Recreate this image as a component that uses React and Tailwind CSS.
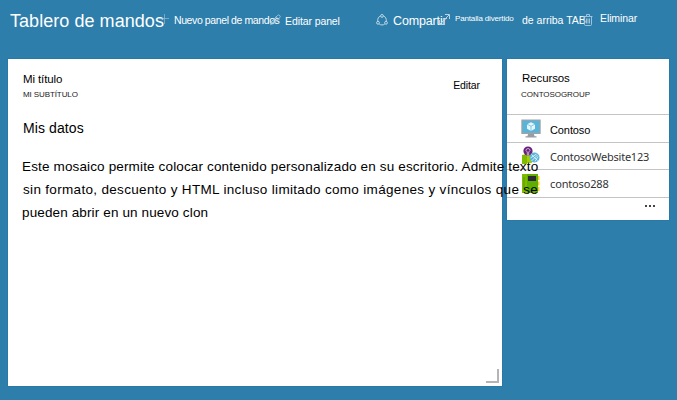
const Label = ({ className = "", children }) => (
  <span className={`block whitespace-nowrap shrink-0 ${className}`}>{children}</span>
);

const PlusIcon = () => (
  <svg viewBox="0 0 10 10" className="mt-[14px] h-[10px] w-[10px] shrink-0" stroke="#9cc4dc" strokeOpacity=".6" fill="none">
    <path d="M5.500 0v10M0 4.500h10" />
  </svg>
);

const PencilIcon = () => (
  <svg viewBox="0 0 11 11" className="mt-[14px] h-[11px] w-[11px] shrink-0" stroke="#a9cbe0" strokeWidth=".9" fill="none">
    <path d="M.6 10.400l1-3 5.900-5.900a1.500 1.500 0 0 1 2.200 2.200L3.700 9.500zM1.600 7.400l2.100 2.100M6.200 2.800l2.200 2.200" />
  </svg>
);

const ShareIcon = () => (
  <svg viewBox="0 0 12 12" className="mt-[14px] h-3 w-3 shrink-0" stroke="#c3dbe9" strokeWidth=".95" fill="none">
    <path d="M4.300 2.100C2.500 2.800 1.600 4.500 1.700 7M7.700 2.100c1.800.7 2.700 2.400 2.600 4.900M3.300 10.200c1.700 1 3.700 1 5.400 0" />
    <circle cx="6" cy="1.900" r="1.400" />
    <circle cx="2" cy="8.800" r="1.400" />
    <circle cx="10" cy="8.800" r="1.400" />
  </svg>
);

const ExpandIcon = () => (
  <svg viewBox="0 0 11 11" className="mt-[14px] h-[11px] w-[11px] shrink-0" stroke="#b9d5e5" fill="none">
    <path d="M1 10L10 1M6 .500h4.500v4.500M.500 6v4.500h4.500" />
  </svg>
);

const TrashIcon = () => (
  <svg viewBox="0 0 10 12" className="mt-[14px] h-3 w-[10px] shrink-0" stroke="#a9cbe0" fill="none">
    <path d="M.5 2.500h9M3.500 2V.500h3V2M1.500 2.500v8q0 1 1 1h5q1 0 1-1v-8M3.500 4.500v5M5 4.500v5M6.500 4.500v5" strokeWidth=".9" />
  </svg>
);

const MonitorIcon = () => (
  <svg viewBox="0 0 20 20" className="h-5 w-5 shrink-0">
    <rect x=".3" y=".5" width="19.400" height="14.500" fill="#a0a3a5" />
    <rect x="1.500" y="1.700" width="17" height="12" fill="#59b4d9" />
    <path d="M7 15h6l.5 2.200H15.500V18.500h-11v-1.300h2z" fill="#999da0" />
    <path d="M10 3.200l4 2v4.600l-4 2.200-4-2.200V5.200z" fill="#e8f6fb" />
    <path d="M6 5.200l4 2 4-2M10 7.200V12" stroke="#59b4d9" strokeWidth=".7" fill="none" />
  </svg>
);

const WebsiteIcon = () => (
  <svg viewBox="0 0 20 20" className="h-5 w-5 shrink-0">
    <path d="M1 9l5-1v10H1z" fill="#7fba00" />
    <path d="M6 9h5v8H6z" fill="#a5ce00" />
    <circle cx="7" cy="5" r="4.600" fill="#68217a" />
    <path d="M5 4.500a2 2 0 1 1 4 0L7.700 6v3H6.300V6z" fill="none" stroke="#dac5df" strokeWidth=".8" />
    <circle cx="13.500" cy="11.500" r="5" fill="#59b4d9" />
    <path d="M9.500 12l6-4M10.500 15l6-6M14 15.500l3-5M10.500 8.500l6 6" stroke="#e0f2fa" strokeWidth=".9" />
  </svg>
);

const BoardIcon = () => (
  <svg viewBox="0 0 20 20" className="h-5 w-5 shrink-0">
    <path d="M16 2h2.500v4H16zM16 7.500h2.500v4H16zM16 13h2.500v4H16z" fill="#fcd116" />
    <path d="M1 0h16v19H1z" fill="#5fae00" />
    <path d="M1 0h5v19H1z" fill="#7fba00" />
    <path d="M7 2h8v5H7z" fill="#292c36" />
    <path d="M3 3v12M5 16h8" stroke="#449500" fill="none" strokeWidth=".8" />
  </svg>
);

function Toolbar() {
  return (
    <header className="flex h-[59px] items-start pl-[10px] text-white">
      <Label className="w-[149px] pt-[10px] text-[18px] leading-[22px] tracking-[0.05px]">Tablero de mandos</Label>
      <PlusIcon />
      <Label className="ml-[5px] w-[96px] pt-[13px] text-[10.5px] leading-[15px] tracking-[-0.4px]">Nuevo panel de mandos</Label>
      <PencilIcon />
      <Label className="ml-[4px] w-[91px] pt-[14px] text-[10.5px] leading-[15px] tracking-[-0.1px]">Editar panel</Label>
      <ShareIcon />
      <Label className="ml-[5px] w-[46px] pt-[13px] text-[12.5px] leading-[17px] tracking-[-0.15px]">Compartir</Label>
      <ExpandIcon />
      <Label className="ml-[5px] w-[67px] pt-[13px] text-[8px] leading-[12px] tracking-[-0.15px]">Pantalla divertido</Label>
      <Label className="w-[61px] pt-[13px] text-[10.5px] leading-[15px]">de arriba TAB</Label>
      <TrashIcon />
      <Label className="ml-[7px] pt-[11px] text-[10.5px] leading-[15px] tracking-[-0.1px]">Eliminar</Label>
    </header>
  );
}

function CustomTile() {
  return (
    <section className="relative z-10 flex h-[327px] w-[494px] shrink-0 flex-col bg-white pl-[15px] shadow-[0_0_0_1px_#1d6f9e55]">
      <div className="flex justify-between pr-[22px]">
        <div>
          <Label className="mt-[13px] text-[11.5px] leading-[15px] tracking-[-0.1px]">Mi título</Label>
          <Label className="mt-[3px] text-[8px] leading-[10px] tracking-[-0.1px] text-[#222]">MI SUBTÍTULO</Label>
        </div>
        <Label className="mt-[19px] text-[10.5px] leading-[15px] tracking-[-0.1px]">Editar</Label>
      </div>
      <Label className="mt-[19px] text-[14px] leading-[18px] tracking-[0.1px]">Mis datos</Label>
      <div className="-ml-px mt-[18px] text-[13.5px] leading-[23px]">
        <Label className="tracking-[0.145px]">Este mosaico permite colocar contenido personalizado en su escritorio. Admite texto</Label>
        <Label className="pl-px tracking-[0.32px]">sin formato, descuento y HTML incluso limitado como imágenes y vínculos que se</Label>
        <Label className="tracking-[0.13px]">pueden abrir en un nuevo clon</Label>
      </div>
      <div className="mb-[3px] mr-[3px] mt-auto h-[14px] w-[13px] self-end border-b-2 border-r-2 border-[#b5b5b5]" />
    </section>
  );
}

function ResourcesTile() {
  return (
    <section className="flex h-[161px] w-[162px] shrink-0 flex-col bg-white shadow-[0_0_0_1px_#1d6f9e55]">
      <div className="h-[55px] pl-[14px] pt-[12px]">
        <Label className="pl-px text-[11.5px] leading-[15px] tracking-[-0.1px]">Recursos</Label>
        <Label className="mt-[4px] text-[8px] leading-[10px] tracking-[-0.05px] text-[#222]">CONTOSOGROUP</Label>
      </div>
      <div className="flex h-[28px] items-center border-t border-[#c4c4c4] pl-[14px]">
        <MonitorIcon />
        <Label className="ml-[9px] pt-[3px] text-[11px] leading-[15px] tracking-[-0.1px]">Contoso</Label>
      </div>
      <div className="flex h-[27px] items-center border-t border-[#c4c4c4] pl-[14px]">
        <WebsiteIcon />
        <Label className="ml-[9px] font-['Noto_Sans',sans-serif] text-[11px] leading-[15px] tracking-[-0.24px] text-[#333]">ContosoWebsite123</Label>
      </div>
      <div className="flex h-[28px] items-center border-t border-[#c4c4c4] pl-[14px]">
        <BoardIcon />
        <Label className="ml-[9px] font-['Noto_Sans',sans-serif] text-[11px] leading-[15px] tracking-[-0.15px] text-[#333]">contoso288</Label>
      </div>
      <div className="flex flex-1 justify-end gap-[2px] border-t border-[#c4c4c4] pr-[14px] pt-[7px]">
        <i className="h-[2px] w-[2px] bg-[#444]" />
        <i className="h-[2px] w-[2px] bg-[#444]" />
        <i className="h-[2px] w-[2px] bg-[#444]" />
      </div>
    </section>
  );
}

export default function App() {
  return (
    <div className="h-[400px] w-[677px] overflow-hidden bg-[#2d7eab] font-['Liberation_Sans',Arial,sans-serif] text-black">
      <Toolbar />
      <main className="flex items-start gap-[5px] pl-[8px]">
        <CustomTile />
        <ResourcesTile />
      </main>
    </div>
  );
}
